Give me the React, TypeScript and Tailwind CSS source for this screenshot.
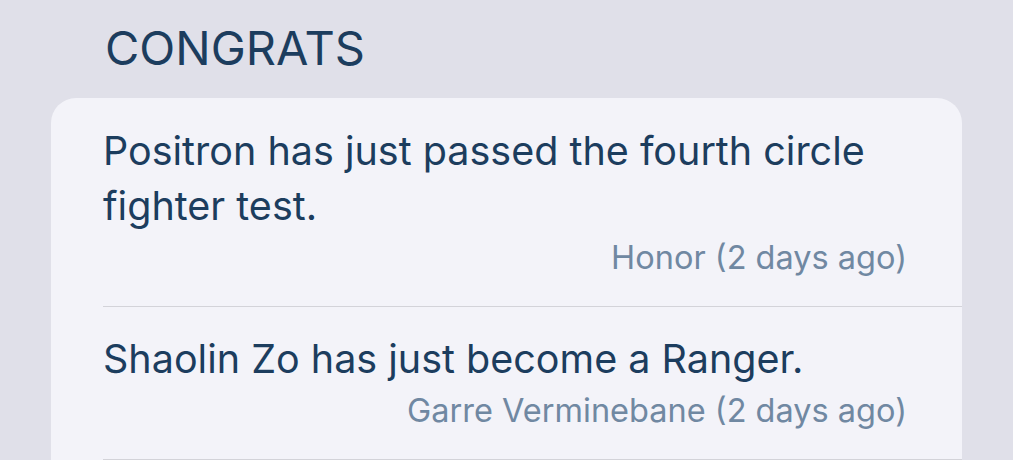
import React from "react";

type Congrat = {
  message: string;
  author: string;
  when: string;
};

const congrats: Congrat[] = [
  {
    message: "Positron has just passed the fourth circle fighter test.",
    author: "Honor",
    when: "2 days ago",
  },
  {
    message: "Shaolin Zo has just become a Ranger.",
    author: "Garre Verminebane",
    when: "2 days ago",
  },
];

const CongratRow: React.FC<{ item: Congrat }> = ({ item }) => (
  <div className="pl-[52px]">
    <div className="border-b border-[#d3d3d9] pr-[55px] pt-[25px] pb-[24px]">
      <p className="text-[39.5px] leading-[55px] text-[#1c3d5e]">{item.message}</p>
      <p className="text-right text-[32.5px] leading-[48px] text-[#7088a2]">
        {item.author} ({item.when})
      </p>
    </div>
  </div>
);

export default function App() {
  return (
    <div
      className="h-[460px] w-full overflow-hidden bg-[#e0e0e9] px-[51px] pt-[20px]"
      style={{ fontFamily: "Inter, 'Noto Sans', sans-serif" }}
    >
      <h1 className="pl-[54px] text-[47px] leading-[56px] text-[#1c3d5e]">CONGRATS</h1>
      <div className="mt-[22px] overflow-hidden rounded-[25px] bg-[#f3f3f9] pt-px pb-[60px]">
        {congrats.map((c) => (
          <CongratRow key={c.message} item={c} />
        ))}
      </div>
    </div>
  );
}
